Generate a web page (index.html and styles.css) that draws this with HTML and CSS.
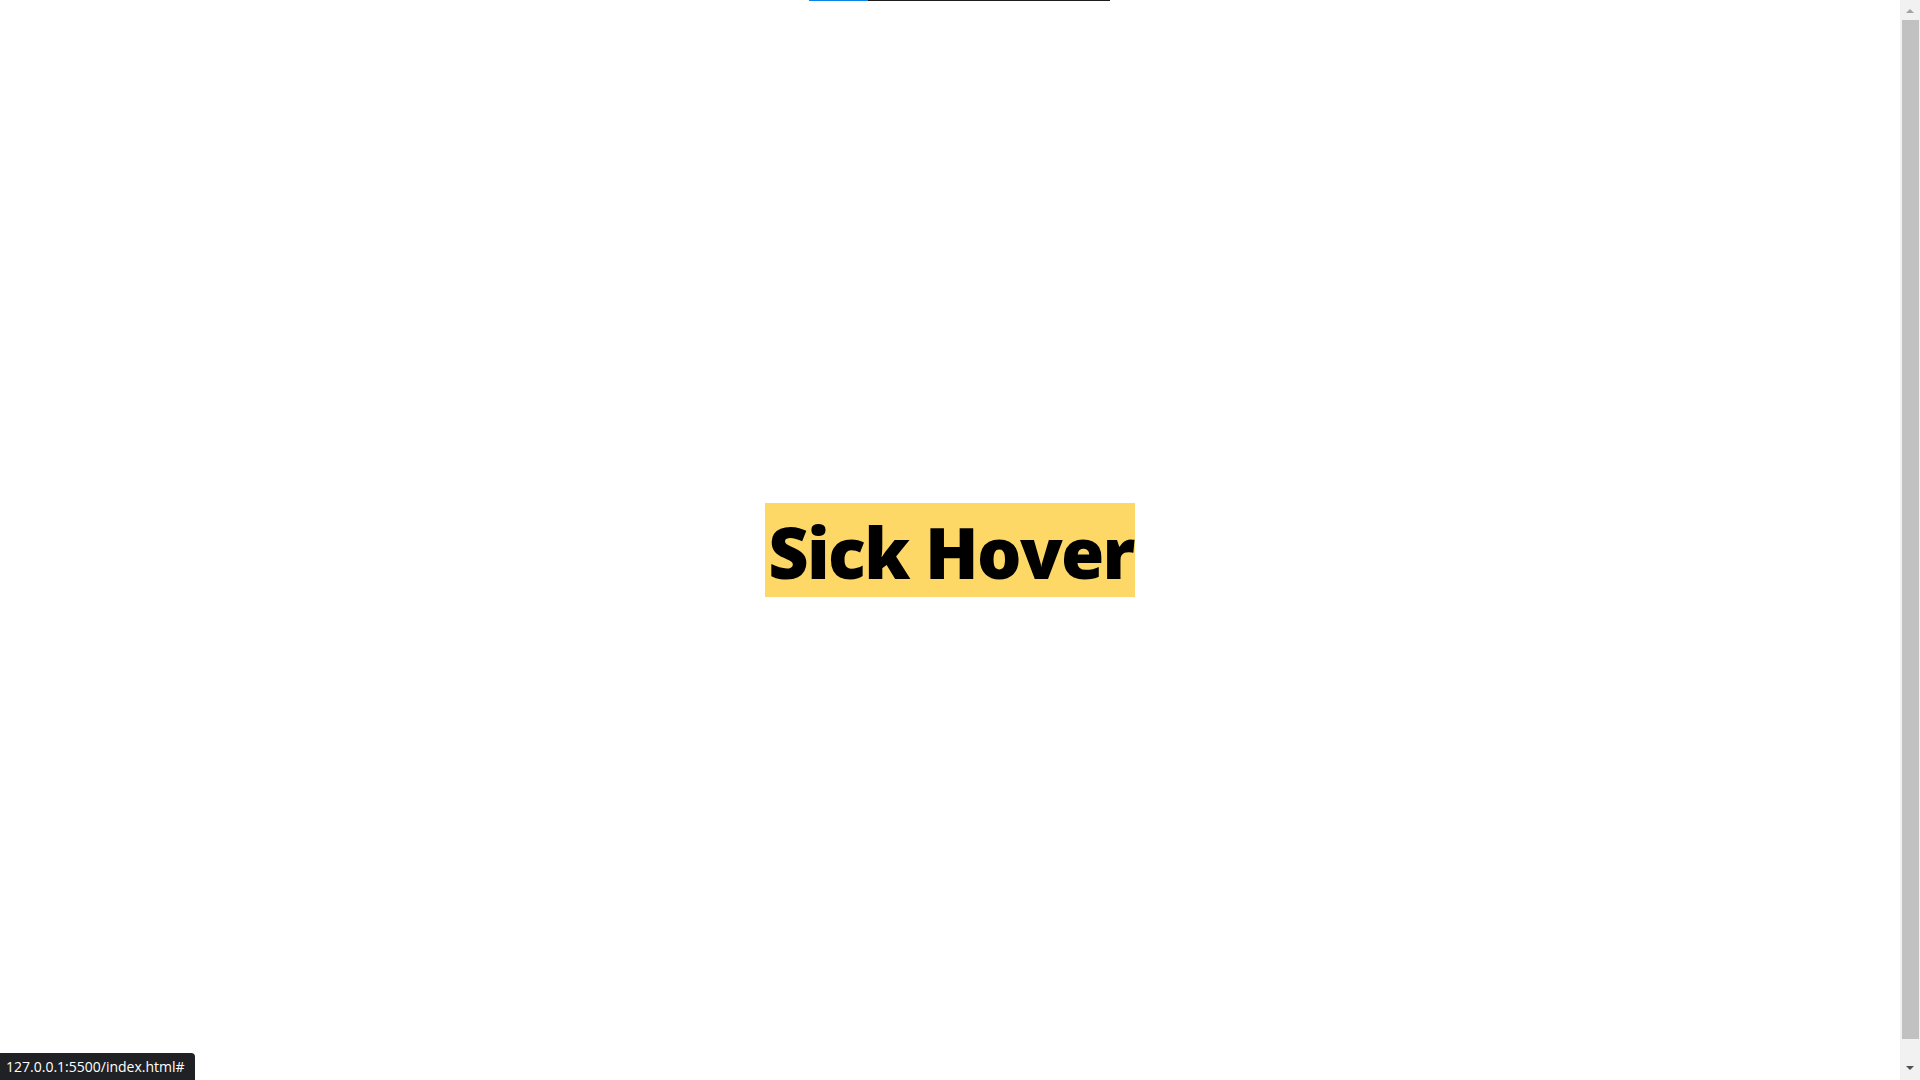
FILE: index.html
```html
<!DOCTYPE html>
<html lang="en">
<head>
<meta charset="utf-8">
<title>Sick Hover</title>
<link rel="stylesheet" href="styles.css">
</head>
<body>
<div class="page">
  <div class="topbar"><span class="progress"></span></div>
  <main class="stage">
    <h1 class="title">Sick Hover</h1>
  </main>
</div>
<div class="scrollbar">
  <span class="arrow arrow-up"></span>
  <span class="thumb"></span>
  <span class="arrow arrow-down"></span>
</div>
<div class="status">127.0.0.1:5500/index.html#</div>
</body>
</html>
```
FILE: styles.css
```css
html, body {
  margin: 0;
  padding: 0;
  height: 100%;
  overflow: hidden;
  background: #ffffff;
}

.page {
  width: calc(100% - 20px);
  height: 100vh;
  display: flex;
  flex-direction: column;
}

.topbar {
  margin-left: 809px;
  width: 301px;
  height: 1px;
  background: #1c1c1c;
  display: flex;
}

.progress {
  width: 59px;
  height: 1px;
  background: #0a85e6;
}

.stage {
  flex: 1;
  display: flex;
  align-items: center;
  justify-content: center;
  padding-top: 19px;
}

.title {
  margin: 0;
  background: #fed866;
  color: #000000;
  font-family: "Open Sans", Lato, sans-serif;
  font-weight: 800;
  font-size: 70px;
  letter-spacing: -1.7px;
  line-height: 90px;
  padding: 4px 1px 0 3px;
  white-space: nowrap;
}

.scrollbar {
  position: fixed;
  top: 0;
  right: 0;
  width: 20px;
  height: 100vh;
  background: #f1f1f1;
  display: flex;
  flex-direction: column;
  align-items: center;
}

.arrow {
  width: 0;
  height: 0;
  border-left: 4px solid transparent;
  border-right: 4px solid transparent;
}

.arrow-up {
  margin-top: 9px;
  border-bottom: 4px solid #a3a3a3;
}

.arrow-down {
  margin-top: auto;
  margin-bottom: 10px;
  border-top: 4px solid #505050;
}

.thumb {
  margin-top: 7px;
  width: 17px;
  height: 1019px;
  background: #c1c1c1;
}

.status {
  position: fixed;
  left: 0;
  bottom: 0;
  height: 27px;
  padding: 0 10px 0 6px;
  background: #202124;
  color: #ffffff;
  border-top-right-radius: 4px;
  font-family: "Open Sans", "Noto Sans", sans-serif;
  font-size: 14px;
  line-height: 27px;
  white-space: nowrap;
}
```
